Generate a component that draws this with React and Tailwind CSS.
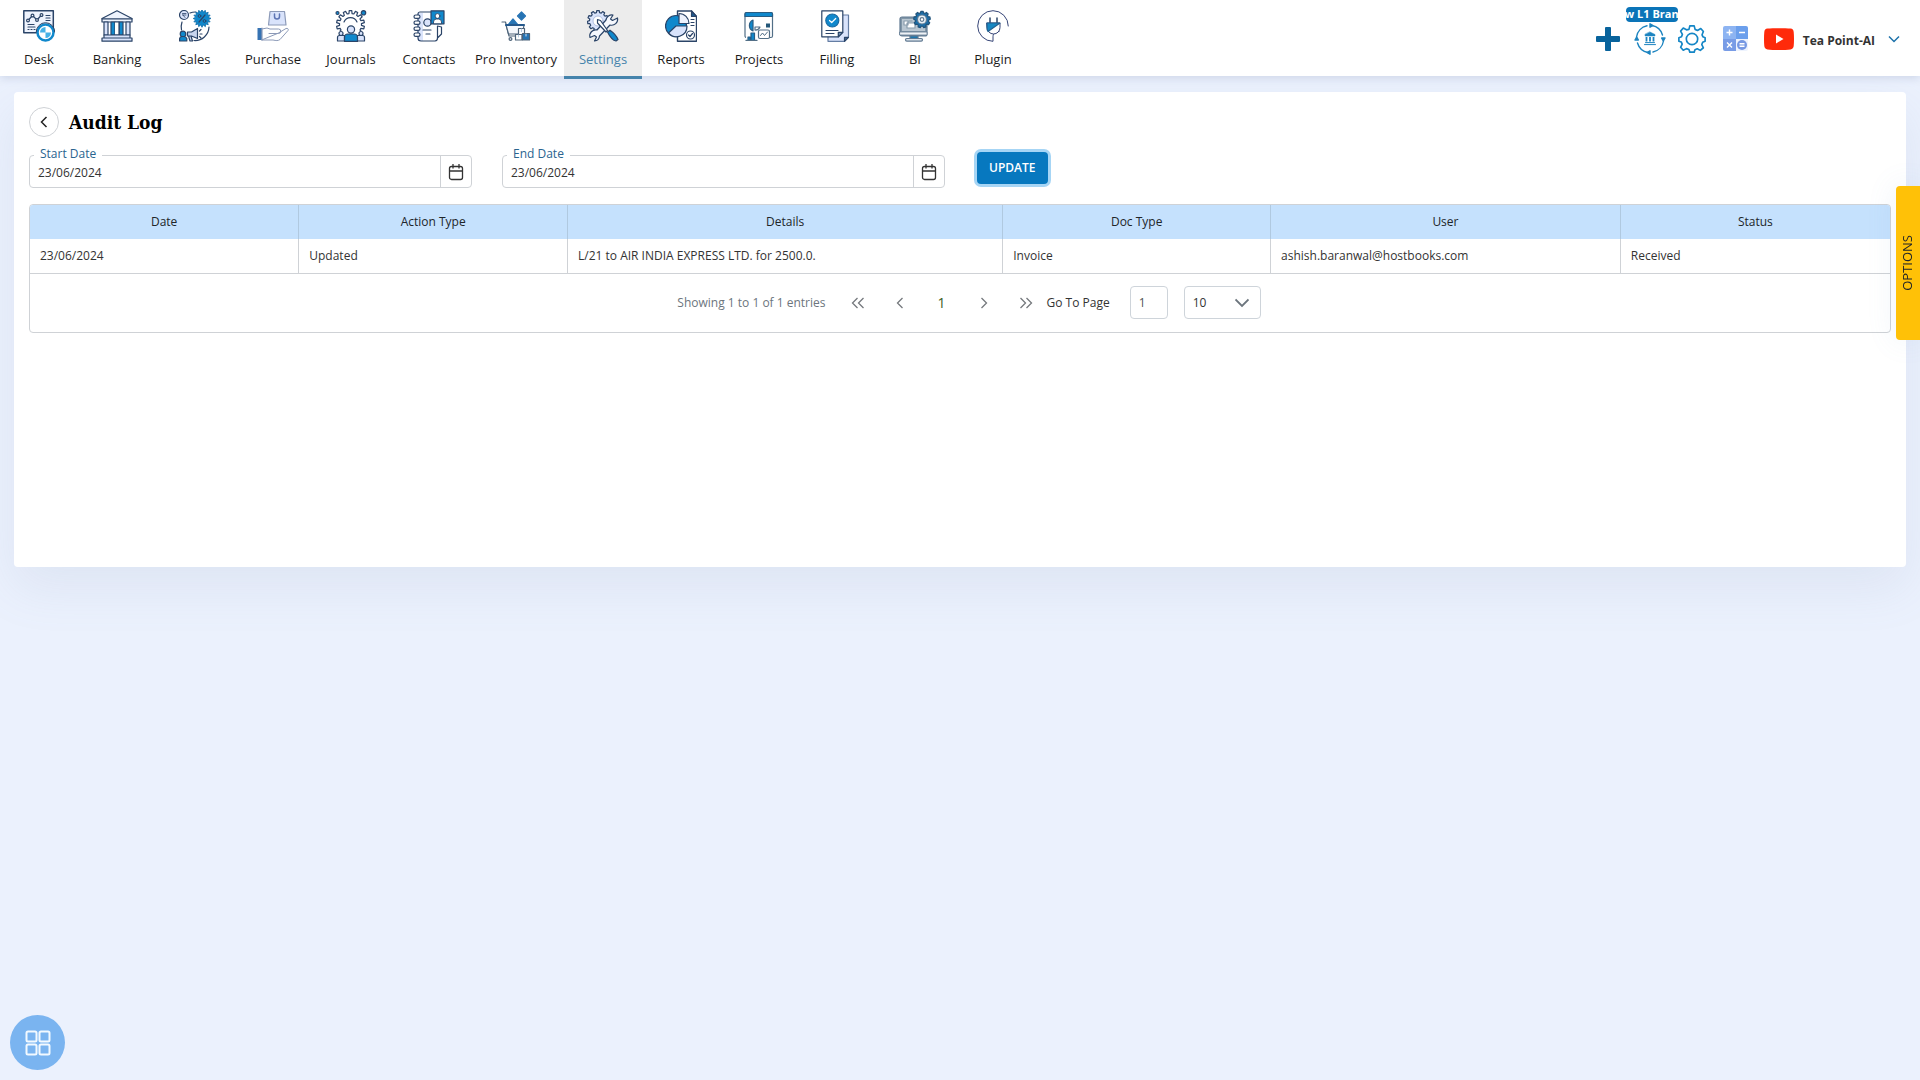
import React, { useState } from "react";

const NAVY = "#2b4468";
const BLUE = "#1088cc";
const PALE = "#d9e3fb";

function Svg({ size = 32, children, ...rest }) {
  return (
    <svg width={size} height={size} viewBox="0 0 32 32" fill="none" stroke={NAVY} strokeWidth="1.2" strokeLinecap="round" strokeLinejoin="round" aria-hidden="true" {...rest}>
      {children}
    </svg>
  );
}

/* Outline of a toothed wheel centred on (cx, cy). */
function cog(cx, cy, outer, inner, teeth) {
  const pts = [];
  const step = (Math.PI * 2) / teeth;
  for (let i = 0; i < teeth; i++) {
    [[-0.32, inner], [-0.2, outer], [0.2, outer], [0.32, inner]].forEach(([o, r]) => {
      const a = (i + o) * step - Math.PI / 2;
      pts.push(`${(cx + Math.cos(a) * r).toFixed(2)} ${(cy + Math.sin(a) * r).toFixed(2)}`);
    });
  }
  return `M${pts.join("L")}Z`;
}

function star(cx, cy, outer, inner, points) {
  const pts = [];
  for (let i = 0; i < points * 2; i++) {
    const a = (i * Math.PI) / points;
    const r = i % 2 ? inner : outer;
    pts.push(`${(cx + Math.cos(a) * r).toFixed(2)} ${(cy + Math.sin(a) * r).toFixed(2)}`);
  }
  return `M${pts.join("L")}Z`;
}

const DeskIcon = () => (
  <Svg>
    <rect x="0.8" y="0.8" width="29.5" height="22" fill="#eef3fd" strokeWidth="1.5" />
    <path d="M5 10.500l4.500-5 4.500 4.500 4.500-5" />
    {[[5, 10.500], [9.500, 5.500], [14, 10], [18.500, 5]].map(([x, y]) => <circle key={x} cx={x} cy={y} r="1.400" fill="#fff" />)}
    <path d="M23 5.500h4M23 8h4M23 10.500h4M5 14.500h6M5 17h7M5 19.500h1M8 19.500h1M11 19.500h1" />
    <circle cx="22.500" cy="22.500" r="8" fill="#fff" stroke={BLUE} strokeWidth="2.500" />
    <path d="M13.200 22a9.300 9.300 0 0 1 18.600 0" stroke={NAVY} strokeWidth="1" />
    <path d="M22.500 22.500v-5.500a5.500 5.500 0 0 0-5.500 5.500zM22.500 22.500v5.500a5.500 5.500 0 0 0 5.500-5.500z" fill="#45b1e6" stroke="none" />
  </Svg>
);

const BankingIcon = () => (
  <Svg>
    <path d="M1 8.500L16 .8l15 7.700v3.500H1z" fill="#eef3fd" />
    <path d="M1 8.800h30" />
    <path d="M3 12h4v13H3zM25 12h4v13h-4z" fill={PALE} />
    <path d="M10 12h4v13h-4zM18 12h4v13h-4z" fill={BLUE} />
    <path d="M14 12h4v13h-4" fill="#fff" />
    <path d="M3 25h26v3H3zM1 28h30v3.200H1z" fill={PALE} />
  </Svg>
);

const SalesIcon = () => (
  <Svg>
    <path d="M11 3a14 14 0 0 1 6-1M30 17a14 14 0 0 1-15 13.500M2.500 20a15 15 0 0 1 .5-8" />
    <circle cx="5" cy="5" r="4.500" fill={PALE} />
    <path d="M3.500 3.500h3.500M3.500 5h3.500M4 5l2 2.500" strokeWidth=".8" />
    <path d={star(23, 8.500, 8.800, 6.500, 16)} fill={BLUE} stroke="#126ca7" strokeWidth=".8" />
    <path d="M26 5l-6 7" strokeWidth="1.200" />
    <circle cx="20.500" cy="6" r="1.400" strokeWidth="1" />
    <circle cx="25.500" cy="11" r="1.400" strokeWidth="1" />
    <circle cx="4" cy="24" r="2.800" fill={BLUE} />
    <path d="M.6 31v-2.500a2.500 2.500 0 0 1 2.500-2h2a3 3 0 0 1 2.700 2V31z" fill={BLUE} />
    <path d="M8.500 22h4l6-3.500v10L12.500 26h-4zM9.500 26l1.500 5h2.500l-1.500-5" fill="#c8d5ee" />
    <path d="M20.500 21l1.500-1.500M21 24h2M20.500 26.500l1.500 1.500" />
  </Svg>
);

const PurchaseIcon = () => (
  <Svg stroke="#8c9ab8">
    <path d="M13 1.500h14.500L29 15H11.500z" fill={PALE} />
    <path d="M17.500 4v2.500a2.500 2.500 0 0 0 5 0V4" stroke="#5d75b4" strokeWidth="1.500" />
    <path d="M.5 18h4.500v12H.5z" fill="#3673b3" stroke="none" />
    <path d="M5 19l5-1 3 1h8.500a2 2 0 0 1 0 4.500H12M21.500 23l7.500-4.500c1.500-.6 3 .7 2 2L23 29.500c-2 1.500-4 1.200-7 .5H5z" strokeWidth="1" />
    <path d="M5 18v12" />
  </Svg>
);

const JournalsIcon = () => (
  <Svg>
    <path d={cog(15.500, 14.500, 14, 11, 14)} fill="#fff" />
    <path d="M0 21h32v11H0z" fill="#fff" stroke="none" />
    <path d="M9 12a7 7 0 0 1 13 0" />
    <circle cx="2.500" cy="3" r="1.500" fill={BLUE} />
    <circle cx="28.500" cy="2.800" r="2.200" fill={BLUE} />
    <circle cx="6" cy="23.500" r="2" fill={PALE} />
    <circle cx="26" cy="23.500" r="2" fill={PALE} />
    <path d="M2.500 31v-3.500c0-1 1-2 2-2h5V31zM22 25.500h5.500c1 0 2 1 2 2V31H22z" fill={PALE} />
    <circle cx="16" cy="19.500" r="3.600" fill={PALE} />
    <path d="M9.500 31.400V27c0-1.500 1.500-3 3-3h7c1.500 0 3 1.500 3 3v4.400z" fill={BLUE} />
  </Svg>
);

const ContactsIcon = () => (
  <Svg>
    <path d="M5 3h19v26a2 2 0 0 1-2 2H5z" fill="#fff" stroke="none" />
    <path d="M5 3h5v28H5z" fill={PALE} stroke="none" />
    <path d="M5 4a2 2 0 0 1 2-2h14M5 4v24a3 3 0 0 0 3 3h14a3 3 0 0 0 2.500-3V16l4 1v7l-4 4" fill="none" />
    {[6, 12, 18, 24].map((y) => <rect key={y} x="1" y={y - 1} width="6" height="3.400" rx="1.700" fill="#fff" />)}
    <circle cx="14.500" cy="12.500" r="3.700" fill={PALE} />
    <path d="M10 20h8M13 24h4" />
    <rect x="18" y=".8" width="13" height="13" fill={BLUE} />
    <circle cx="24.500" cy="6" r="2.400" fill="#fff" strokeWidth=".9" />
    <path d="M20.500 13.500v-1.500a3 3 0 0 1 3-3h2a3 3 0 0 1 3 3v1.500z" fill="#fff" strokeWidth=".9" />
  </Svg>
);

const InventoryIcon = () => (
  <Svg stroke="#4d6379">
    <path d="M21.500 2l4 4-4 4-4-4z" fill="#2674b4" stroke="#2674b4" />
    <path d="M8 15l5-6 5 6z" fill="#2674b4" stroke="#2674b4" />
    <path d="M2 12h3.500L9 26h10" />
    <path d="M6 15h18l-1.500 9h-14z" fill="#f4f7fc" />
    <path d="M6 15h18" stroke="#24588c" strokeWidth="2" />
    <circle cx="10.500" cy="29" r="1.400" />
    <rect x="18.500" y="18.500" width="6" height="6" fill="#fff" />
    <rect x="15.500" y="24.500" width="6.500" height="5.500" fill="#fff" />
    <rect x="22.500" y="23.500" width="7" height="6.500" fill="#2674b4" />
    <path d="M21.500 19v2.500M18.500 25v2M26 24v2" stroke="#b8cde3" />
  </Svg>
);

const SettingsIcon = () => (
  <Svg>
    <path d={cog(11, 11, 10.500, 8.500, 11)} fill={PALE} />
    <circle cx="11" cy="11" r="5" fill="#fff" stroke="#9fb1d6" strokeWidth=".8" />
    <path d="M26 5l-2.500 4 2 1.500 5-2.500a6 6 0 0 1-7.500 7L12.500 26a5.500 5.500 0 0 1-5 5l2-4-2-1.500-4.500 2a6 6 0 0 1 7-7.500L19 10a6 6 0 0 1 7-5z" fill="#f6f8fd" />
    <path d="M10.500 9.500l3 1 7 10-1.500 1.500-8.500-9z" fill="#fff" />
    <path d="M20.500 22l2.500-1.800c4 2.800 7 6.500 8 9.300L29 31c-3-.5-6-4-8.500-9z" fill={BLUE} />
  </Svg>
);

const ReportsIcon = () => (
  <Svg>
    <path d="M12.500 1h14l5 5.500v24.800h-19z" fill="#fff" strokeWidth="1.400" />
    <path d="M26.500 1v5.500h5z" fill="#1d5c92" />
    <circle cx="11" cy="16" r="10.500" fill={BLUE} />
    <path d="M11 16h11a10.500 10.500 0 0 1-18.500 7z" fill={PALE} />
    <path d="M14 3.500A10 10 0 0 1 24 13.500H14z" fill="#edf2fd" />
    <path d="M26 9.500h3M26 12.500h3M26 15.500h3" />
    <circle cx="25.500" cy="25" r="4" fill="#fff" />
    <path d="M23.500 25l1.500 1.500 2.500-3" />
  </Svg>
);

const ProjectsIcon = () => (
  <Svg stroke="#526f87">
    <rect x="2" y="2.500" width="27.500" height="25" rx="1.500" fill="#fff" />
    <path d="M2 6.500V4a1.500 1.500 0 0 1 1.500-1.500H28A1.500 1.500 0 0 1 29.500 4v2.500z" fill={BLUE} stroke="#295d83" />
    <path d="M10 10a6 6 0 0 0 0 11z" fill={BLUE} stroke="#295d83" />
    <path d="M12 20v-3h5a5 5 0 0 1-5 3z" fill="#fff" />
    <rect x="23" y="13.500" width="4" height="4" fill="#245779" stroke="none" />
    <path d="M3 27h15v5H3z" fill="#fff" stroke="none" />
    <path d="M5 30v-3h2v3M8 30v-7h3.500v7" fill={BLUE} stroke="#295d83" />
    <path d="M3 30.400h11" />
    <rect x="15.500" y="20" width="11" height="8.500" rx="1.500" fill="#fff" />
    <path d="M17.500 25.500l2-2.500 2 2.500 3-3.500" strokeWidth="1" />
  </Svg>
);

const FillingIcon = () => (
  <Svg>
    <path d="M7 5h20.500v22l-4 4.300H7z" fill={PALE} stroke="#647da3" />
    <path d="M23.500 31.300v-4h4z" fill="#466b91" />
    <path d="M.8.8h21v21.500l-4.500 4.500H.8z" fill="#fff" />
    <path d="M17.300 26.800v-4.500h4.500z" fill="#7395b3" />
    <circle cx="11.300" cy="10.500" r="6.500" fill={BLUE} stroke="#1a6ba3" />
    <path d="M8.500 10.500l2.200 2 4-4" stroke="#fff" />
    <path d="M5 20.500h12M5 23.500h8" />
  </Svg>
);

const BiIcon = () => (
  <Svg stroke="#617a92">
    <rect x="1" y="7" width="27" height="19" rx="2" fill="#8297a8" />
    <rect x="3" y="9" width="23" height="12" fill="#b9c6d1" stroke="none" />
    <path d="M5 11h4v4H5zM8 13h8v5H8zM10 11h3" fill="#fff" stroke="#8a9dad" />
    <path d="M1 22h27v3H1z" fill="#eef2f6" strokeWidth=".8" />
    <path d="M11 26h8v3h-8z" fill="#1b76ae" />
    <rect x="6.500" y="28.500" width="17" height="2.600" rx="1.300" fill="#dce4ec" />
    <path d={cog(23, 9.500, 8.300, 6.800, 9)} fill="#1c6fa9" stroke="#23547b" />
    <circle cx="23" cy="9.500" r="4.500" fill="#e9f1f7" />
    <circle cx="23" cy="9.500" r="1.800" fill="#fff" />
  </Svg>
);

const PluginIcon = () => (
  <Svg stroke="#364577">
    <path d="M31.300 16A15.300 15.300 0 1 0 16 31.300v-4.500c0-3 2-5.300 6-5.300" strokeWidth="1" />
    <path d="M13 8v4.500M20 8v4.500" stroke={NAVY} strokeWidth="1.500" />
    <path d="M10 13h13v4.500a6 6 0 0 1-13 0z" fill="#fff" strokeWidth="1" />
    <path d="M10 13h13L11 21.500a7 7 0 0 1-1-4z" fill="#1687c2" stroke="#23608f" />
  </Svg>
);

const NAV = [
  ["Desk", DeskIcon],
  ["Banking", BankingIcon],
  ["Sales", SalesIcon],
  ["Purchase", PurchaseIcon],
  ["Journals", JournalsIcon],
  ["Contacts", ContactsIcon],
  ["Pro Inventory", InventoryIcon],
  ["Settings", SettingsIcon],
  ["Reports", ReportsIcon],
  ["Projects", ProjectsIcon],
  ["Filling", FillingIcon],
  ["BI", BiIcon],
  ["Plugin", PluginIcon],
];

function BranchIcon() {
  return (
    <Svg stroke="#1c84c0" strokeWidth="1.400">
      <path d="M18 2.500A13.500 13.500 0 0 1 28.500 12M29.500 18A13.500 13.500 0 0 1 19 29M14 29.500A13.500 13.500 0 0 1 3.500 20M2.500 14A13.500 13.500 0 0 1 13 2.800" />
      <path d="M16 .8l3 1.700-3 1.700zM31 15l-1.700 3-1.700-3zM16 31.200L13 29.500l3-1.700zM1 17l1.700-3 1.700 3z" fill="#1c84c0" />
      <path d="M16 9l5 2.500v1.500H11v-1.500z" fill="#1c84c0" strokeWidth=".5" />
      <path d="M12.500 14v4.500M16 14v4.500M19.500 14v4.500" strokeWidth="1.800" strokeLinecap="butt" />
      <path d="M11.500 19.600h9M10.500 21.600h11" strokeWidth="1" />
    </Svg>
  );
}

function CalculatorIcon() {
  return (
    <svg width="26" height="26" viewBox="0 0 26 26" fill="none" aria-hidden="true">
      <path d="M2 0h11v13H0V2a2 2 0 0 1 2-2z" fill="#8db4f2" />
      <path d="M13 0h10a2 2 0 0 1 2 2v11H13z" fill="#6b9fec" />
      <path d="M0 13h13v12H2a2 2 0 0 1-2-2z" fill="#789ce6" />
      <path d="M13 13h12v10a2 2 0 0 1-2 2H13z" fill="#edf3fe" />
      <circle cx="19" cy="19" r="5" fill="#7698e3" />
      <path d="M3.500 6.500h6M6.500 3.500v6M16 6.500h6M4 16.500l5 5M9 16.500l-5 5M16.500 17.700h5M16.500 20.300h5" stroke="#fff" strokeWidth="1.400" />
    </svg>
  );
}

function Header() {
  return (
    <header className="relative z-10 flex h-[76px] justify-between bg-white shadow-[0_2px_8px_rgba(100,120,160,0.22)]">
      <nav className="flex" aria-label="Main">
        {NAV.map(([label, Icon]) => {
          const active = label === "Settings";
          return (
            <a
              key={label}
              href="#"
              aria-current={active ? "page" : undefined}
              className={
                "flex h-[79px] min-w-[78px] flex-col items-center px-[7px] pt-2.5 text-[13px] leading-5 font-medium whitespace-nowrap " +
                (active ? "border-b-[3px] border-[#4583ab] bg-[#ececec] text-[#4583ab]" : "text-[#1c1c1c]")
              }
            >
              <Icon />
              <span className="mt-[7px]">{label}</span>
            </a>
          );
        })}
      </nav>
      <div className="flex items-center pt-0.5 pr-5">
        <button type="button" aria-label="Add" className="mr-3.5">
          <svg width="24" height="24" viewBox="0 0 24 24" fill="#08639c" aria-hidden="true">
            <path d="M10 0h4a1 1 0 0 1 1 1v8h8a1 1 0 0 1 1 1v4a1 1 0 0 1-1 1h-8v8a1 1 0 0 1-1 1h-4a1 1 0 0 1-1-1v-8H1a1 1 0 0 1-1-1v-4a1 1 0 0 1 1-1h8V1a1 1 0 0 1 1-1z" />
          </svg>
        </button>
        <button type="button" aria-label="Switch branch" className="relative mr-3">
          <BranchIcon />
          <span className="absolute -top-4 -left-2 flex h-[15px] w-[52px] items-center justify-center rounded bg-[#0b74b8] text-[11px] font-bold whitespace-nowrap text-white">
            w L1 Bran
          </span>
        </button>
        <button type="button" aria-label="Preferences" className="mr-[17px]">
          <Svg size={28} stroke="#1486c6" strokeWidth="1.900">
            <path d="M13.500 1h5l1 4 2.800 1.200L26 4l3 3.500-1.500 3.700 1 2.300 2.500 1v4l-2.800 1.200-1 2.600L29 26l-3.500 3-3.500-1.800-2.600 1L18.500 31h-5l-1-3-2.800-1L6 28.800 3 25.500l1.800-3.600-1-2.400L1 18.500v-4l3-1 1-2.800L3 7l3-3.500 3.700 2L12.500 5z" />
            <circle cx="16" cy="16" r="6.500" />
          </Svg>
        </button>
        <button type="button" aria-label="Calculator" className="mr-[15px]">
          <CalculatorIcon />
        </button>
        <a href="#" aria-label="Videos" className="mr-[9px]">
          <svg width="30" height="22" viewBox="0 0 30 22" aria-hidden="true">
            <path d="M3.500.6C9 0 21 0 26.500.6 28.500.8 29.500 2 29.700 4c.4 4 .4 10 0 14-.2 2-1.200 3.200-3.200 3.400-5.500.7-17.500.7-23 0C1.500 21.200.5 20 .3 18c-.4-4-.4-10 0-14C.5 2 1.500.8 3.500.6z" fill="#ff2a0a" />
            <path d="M12 6.500l7.500 4.500L12 15.500z" fill="#fff" />
          </svg>
        </a>
        <button type="button" className="flex items-center text-xs font-bold text-[#333]">
          <span className="mt-1">Tea Point-AI</span>
          <svg className="ml-[13px]" width="12" height="8" viewBox="0 0 12 8" fill="none" stroke="#1d72aa" strokeWidth="1.500" aria-hidden="true">
            <path d="M1 1.500l5 5 5-5" />
          </svg>
        </button>
      </div>
    </header>
  );
}

function DateField({ id, label }) {
  const [value, setValue] = useState("23/06/2024");
  return (
    <div className="relative mt-[3px] flex h-[33px] rounded border border-[#cfd2d6]">
      <label htmlFor={id} className="absolute -top-2.5 left-1 bg-white px-1.5 text-xs leading-4 text-[#2a648f]">
        {label}
      </label>
      <input
        id={id}
        value={value}
        onChange={(e) => setValue(e.target.value)}
        className="min-w-0 flex-1 rounded-l bg-transparent px-2 pt-0.5 text-xs text-[#333] outline-none"
      />
      <button type="button" aria-label={`Choose ${label}`} className="flex w-[31px] items-center justify-center border-l border-[#cfd2d6]">
        <svg width="16" height="18" viewBox="0 0 16 18" fill="none" stroke="#333" strokeWidth="1.300" aria-hidden="true">
          <rect x="1.500" y="3.500" width="13" height="13" rx="2" />
          <path d="M1.500 8h13M5 1v4.500M11 1v4.500" />
        </svg>
      </button>
    </div>
  );
}

const COLUMNS = [
  ["Date", "w-[14.45%]"],
  ["Action Type", "w-[14.45%]"],
  ["Details", "w-[23.4%]"],
  ["Doc Type", "w-[14.4%]"],
  ["User", "w-[18.8%]"],
  ["Status", "w-[14.5%]"],
];

const ROWS = [["23/06/2024", "Updated", "L/21 to AIR INDIA EXPRESS LTD. for 2500.0.", "Invoice", "ashish.baranwal@hostbooks.com", "Received"]];

function PageArrow({ label, d }) {
  return (
    <button type="button" aria-label={label} className="flex h-8 w-[42px] items-center justify-center">
      <svg width="14" height="12" viewBox="0 0 14 12" fill="none" stroke="#75797d" strokeWidth="1.300" aria-hidden="true">
        <path d={d} />
      </svg>
    </button>
  );
}

function Pagination() {
  const [page, setPage] = useState("1");
  return (
    <div className="flex h-[58px] items-center justify-center pl-[18px] text-xs">
      <span className="mr-[11px] text-[#6c757d]">Showing 1 to 1 of 1 entries</span>
      <PageArrow label="First page" d="M6.500 1l-5 5 5 5M12.500 1l-5 5 5 5" />
      <PageArrow label="Previous page" d="M9.500 1l-5 5 5 5" />
      <button type="button" aria-current="page" className="h-8 w-[42px] text-sm font-medium text-[#3c5a1e]">1</button>
      <PageArrow label="Next page" d="M4.500 1l5 5-5 5" />
      <PageArrow label="Last page" d="M1.500 1l5 5-5 5M7.500 1l5 5-5 5" />
      <label htmlFor="goto" className="text-[#333]">Go To Page</label>
      <input
        id="goto"
        value={page}
        onChange={(e) => setPage(e.target.value)}
        className="ml-5 h-[33px] w-[38px] rounded border border-[#ced4da] px-2 text-xs text-[#555]"
      />
      <div className="relative ml-4">
        <select aria-label="Rows per page" className="h-[33px] w-[77px] appearance-none rounded border border-[#ced4da] bg-white px-2 text-xs text-[#333]" defaultValue="10">
          <option>10</option>
          <option>25</option>
          <option>50</option>
        </select>
        <svg className="pointer-events-none absolute top-3 right-3" width="14" height="10" viewBox="0 0 14 10" fill="none" stroke="#6c757d" strokeWidth="1.800" aria-hidden="true">
          <path d="M.5 1.500L7 8l6.500-6.500" />
        </svg>
      </div>
    </div>
  );
}

export default function App() {
  return (
    <div className="min-h-screen bg-[#ebf1fd] font-['Open_Sans','Noto_Sans',sans-serif] text-[#212529]">
      <Header />
      <main className="mx-3.5 mt-4 min-h-[475px] rounded bg-white p-[15px] shadow-[0_20px_50px_rgba(120,140,170,0.12)]">
        <div className="flex h-[30px] items-center gap-2.5">
          <button type="button" aria-label="Back" className="flex size-[30px] items-center justify-center rounded-full border border-[#cfd2d6]">
            <svg width="8" height="12" viewBox="0 0 8 12" fill="none" stroke="#222" strokeWidth="1.500" aria-hidden="true">
              <path d="M6.500 1l-5 5 5 5" />
            </svg>
          </button>
          <h1 className="font-['DejaVu_Serif_Condensed','DejaVu_Serif',serif] text-[19px] font-bold text-black">Audit Log</h1>
        </div>

        <form className="mt-[15px] grid grid-cols-4 items-start gap-[30px]" onSubmit={(e) => e.preventDefault()}>
          <DateField id="start-date" label="Start Date" />
          <DateField id="end-date" label="End Date" />
          <button
            type="submit"
            className="ml-0.5 h-8 justify-self-start rounded bg-[#0778bf] px-3 text-xs font-semibold text-white shadow-[0_0_0_3px_#a6d5f5]"
          >
            UPDATE
          </button>
        </form>

        <div className="mt-4 overflow-hidden rounded border border-[#cfd2d6]">
          <table className="w-full table-fixed border-collapse text-xs">
            <thead>
              <tr className="h-[34px] bg-[#c5e1fd]">
                {COLUMNS.map(([name, width]) => (
                  <th key={name} scope="col" className={width + " border-r border-[#b0c9e0] font-medium last:border-r-0"}>
                    {name}
                  </th>
                ))}
              </tr>
            </thead>
            <tbody>
              {ROWS.map((row) => (
                <tr key={row.join()} className="h-[34px] border-b border-[#cfd2d6]">
                  {row.map((cell, i) => (
                    <td key={i} className="border-r border-[#cfd2d6] px-2.5 text-[#333] last:border-r-0">{cell}</td>
                  ))}
                </tr>
              ))}
            </tbody>
          </table>
          <Pagination />
        </div>
      </main>

      <button
        type="button"
        className="fixed top-[186px] right-0 z-20 flex h-[154px] w-6 items-center justify-center rounded-l bg-[#ffc107] text-[13px] text-[#212529] shadow-[0_0_30px_rgba(110,150,200,0.12)]"
      >
        <span className="rotate-180 [writing-mode:vertical-rl]">OPTIONS</span>
      </button>

      <button type="button" aria-label="Apps" className="fixed bottom-2.5 left-2.5 flex size-[55px] items-center justify-center rounded-full bg-[#7ab4f0]">
        <svg width="26" height="26" viewBox="0 0 26 26" fill="none" stroke="#f2f9ff" strokeWidth="2" aria-hidden="true">
          <rect x="1.500" y="1.500" width="10" height="10" rx="1.500" />
          <rect x="14.500" y="1.500" width="10" height="10" rx="1.500" />
          <rect x="1.500" y="14.500" width="10" height="10" rx="1.500" />
          <rect x="14.500" y="14.500" width="10" height="10" rx="1.500" />
        </svg>
      </button>
    </div>
  );
}
